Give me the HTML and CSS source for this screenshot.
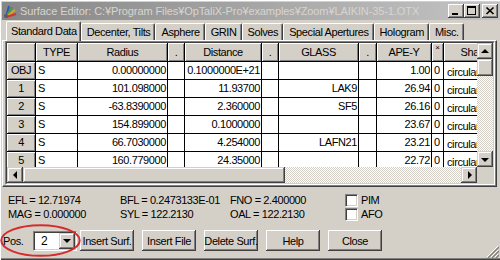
FILE: index.html
```html
<!DOCTYPE html>
<html lang="en">
	<head>
		<meta charset="UTF-8" />
		<meta name="viewport" content="width=device-width, initial-scale=1.0" />
		<title>Surface Editor</title>
		<link rel="stylesheet" href="styles.css">
	</head>
	<body>
		<div class="window">
			<div class="titlebar">
				<svg class="appicon" viewBox="0 0 16 16" width="16" height="16">
					<path d="M3 14 L6 3" stroke="#2f57b8" stroke-width="2" fill="none" />
					<path d="M3 14 L9 4" stroke="#3b9a52" stroke-width="2" fill="none" />
					<path d="M3 14 L12 7" stroke="#d8a424" stroke-width="2" fill="none" />
					<path d="M3 14 L13 11" stroke="#c8382c" stroke-width="2" fill="none" />
					<circle cx="3" cy="13" r="2" fill="#5a5a6a" />
				</svg>
				<span class="title">Surface Editor: C:¥Program Files¥OpTaliX-Pro¥examples¥Zoom¥LAIKIN-35-1.OTX</span>
				<div class="caption-btns">
					<span class="cbtn">
						<svg width="16" height="14"><rect x="4" y="9" width="6" height="2" /></svg>
					</span>
					<span class="cbtn">
						<svg width="16" height="14"><path d="M3 2h9v9H3z M4 4v6h7V4z" fill-rule="evenodd" /></svg>
					</span>
					<span class="cbtn close">
						<svg width="16" height="14"><path d="M4.5 3.5l7 6.5M11.5 3.5l-7 6.5" stroke="#000" stroke-width="1.7" /></svg>
					</span>
				</div>
			</div>

			<div class="tabs">
				<span class="tab active">Standard Data</span>
				<span class="tab">Decenter, Tilts</span>
				<span class="tab">Asphere</span>
				<span class="tab">GRIN</span>
				<span class="tab">Solves</span>
				<span class="tab">Special Apertures</span>
				<span class="tab">Hologram</span>
				<span class="tab">Misc.</span>
			</div>

			<div class="panel">
				<div class="frame">
					<div class="frame-in">
						<div class="view">
							<div class="sheet">
								<div class="c h"></div>
								<div class="c h">TYPE</div>
								<div class="c h">Radius</div>
								<div class="c h">.</div>
								<div class="c h">Distance</div>
								<div class="c h">.</div>
								<div class="c h">GLASS</div>
								<div class="c h">.</div>
								<div class="c h">APE-Y</div>
								<div class="c h small">×</div>
								<div class="c h">Shape</div>

								<div class="c h">OBJ</div>
								<div class="c">S</div>
								<div class="c r">0.00000000</div>
								<div class="c"></div>
								<div class="c r">0.1000000E+21</div>
								<div class="c"></div>
								<div class="c r"></div>
								<div class="c"></div>
								<div class="c r">1.00</div>
								<div class="c">0</div>
								<div class="c sh">circular</div>

								<div class="c h">1</div>
								<div class="c">S</div>
								<div class="c r">101.098000</div>
								<div class="c"></div>
								<div class="c r">11.93700</div>
								<div class="c"></div>
								<div class="c r">LAK9</div>
								<div class="c"></div>
								<div class="c r">26.94</div>
								<div class="c">0</div>
								<div class="c sh">circular</div>

								<div class="c h">2</div>
								<div class="c">S</div>
								<div class="c r">-63.8390000</div>
								<div class="c"></div>
								<div class="c r">2.360000</div>
								<div class="c"></div>
								<div class="c r">SF5</div>
								<div class="c"></div>
								<div class="c r">26.16</div>
								<div class="c">0</div>
								<div class="c sh">circular</div>

								<div class="c h">3</div>
								<div class="c">S</div>
								<div class="c r">154.899000</div>
								<div class="c"></div>
								<div class="c r">0.1000000</div>
								<div class="c"></div>
								<div class="c r"></div>
								<div class="c"></div>
								<div class="c r">23.67</div>
								<div class="c">0</div>
								<div class="c sh">circular</div>

								<div class="c h">4</div>
								<div class="c">S</div>
								<div class="c r">66.7030000</div>
								<div class="c"></div>
								<div class="c r">4.254000</div>
								<div class="c"></div>
								<div class="c r">LAFN21</div>
								<div class="c"></div>
								<div class="c r">23.21</div>
								<div class="c">0</div>
								<div class="c sh">circular</div>

								<div class="c h">5</div>
								<div class="c">S</div>
								<div class="c r">160.779000</div>
								<div class="c"></div>
								<div class="c r">24.35000</div>
								<div class="c"></div>
								<div class="c r"></div>
								<div class="c"></div>
								<div class="c r">22.72</div>
								<div class="c">0</div>
								<div class="c sh">circular</div>
							</div>
						</div>
						<div class="vscroll">
							<span class="sbtn"><i class="arr up"></i></span>
							<span class="thumb thumb-v"></span>
							<span class="track"></span>
							<span class="sbtn"><i class="arr down"></i></span>
						</div>
						<div class="hscroll">
							<span class="sbtn"><i class="arr left"></i></span>
							<span class="thumb thumb-h"></span>
							<span class="track"></span>
							<span class="sbtn"><i class="arr right"></i></span>
						</div>
						<div class="corner"></div>
					</div>
				</div>
			</div>

			<div class="info">
				<span>EFL = 12.71974</span>
				<span>BFL = 0.2473133E-01</span>
				<span>FNO = 2.400000</span>
				<label class="check"><span class="chk"></span>PIM</label>
				<span>MAG = 0.000000</span>
				<span>SYL = 122.2130</span>
				<span>OAL = 122.2130</span>
				<label class="check"><span class="chk"></span>AFO</label>
			</div>

			<div class="actions">
				<span class="pos-label">Pos.</span>
				<div class="combo">
					<span class="combo-val">2</span>
					<span class="sbtn"><i class="arr down"></i></span>
				</div>
				<button class="btn">Insert Surf.</button>
				<button class="btn">Insert File</button>
				<button class="btn">Delete Surf.</button>
				<button class="btn">Help</button>
				<button class="btn">Close</button>
			</div>

			<!-- annotation drawn over the Pos. combo -->
			<svg class="mark" width="82" height="35" viewBox="0 0 82 35">
				<ellipse cx="40.5" cy="16.5" rx="39.2" ry="15.3" fill="none" stroke="#d82a2a" stroke-width="2" />
			</svg>
			<svg class="grip" width="12" height="12" viewBox="0 0 12 12">
				<path d="M11 0L0 11M11 4L4 11M11 8L8 11" stroke="#fff" stroke-width="1" />
				<path d="M12 1L1 12M12 5L5 12M12 9L9 12" stroke="#808080" stroke-width="1.4" />
			</svg>
		</div>
	</body>
</html>
```

FILE: styles.css
```css
html,
body {
	margin: 0;
	padding: 0;
}
body {
	width: 500px;
	height: 260px;
	overflow: hidden;
	background: #d4d0c8;
	font-family: 'Liberation Sans', Arial, sans-serif;
	font-size: 11px;
	letter-spacing: -0.4px;
	color: #000;
}

.window {
	position: relative;
	box-sizing: border-box;
	width: 500px;
	height: 260px;
	padding: 2px 0 2px 2px;
	display: flex;
	flex-direction: column;
	background: #d4d0c8;
	box-shadow: inset 1px 1px #fff, inset 0 -1px #404040, inset 0 -2px #808080;
}

/* title bar (inactive) */
.titlebar {
	flex: none;
	height: 18px;
	display: flex;
	align-items: center;
	padding-left: 1px;
	background: linear-gradient(90deg, #868686, #c4c4c4);
	color: #d8d5ce;
}
.appicon {
	flex: none;
	margin-right: 1px;
}
.title {
	flex: 1;
	white-space: nowrap;
	overflow: hidden;
	letter-spacing: -0.1px;
}
.caption-btns {
	display: flex;
	margin-right: 2px;
}
.cbtn {
	width: 16px;
	height: 14px;
	background: #d4d0c8;
	box-shadow: inset -1px -1px #404040, inset 1px 1px #fff, inset -2px -2px #808080;
}
.cbtn svg {
	display: block;
}
.cbtn.close {
	margin-left: 2px;
}

/* tabs */
.tabs {
	flex: none;
	height: 20px;
	display: flex;
	align-items: flex-end;
	padding-left: 4px;
}
.tab {
	box-sizing: border-box;
	height: 17px;
	padding: 2px 4px 0 5px;
	line-height: 13px;
	white-space: nowrap;
	border-top: 1px solid #fff;
	border-left: 1px solid #fff;
	border-right: 1px solid #404040;
	border-radius: 2px 2px 0 0;
	box-shadow: inset -1px 0 #808080;
}
.tab.active {
	position: relative;
	z-index: 1;
	height: 20px;
	margin-bottom: -1px;
	padding: 3px 3px 0 4px;
	background: #d4d0c8;
}

/* tab page */
.panel {
	flex: none;
	margin-right: 3px;
	padding: 0 1px 1px 2px;
	border-top: 1px solid #fff;
	border-left: 1px solid #fff;
	border-right: 1px solid #404040;
	border-bottom: 1px solid #404040;
	box-shadow: inset -1px -1px #808080;
}
.frame {
	border: 1px solid;
	border-color: #808080 #fff #fff #808080;
}
.frame-in {
	display: grid;
	grid-template-columns: 470px 16px;
	grid-template-rows: 124px 16px;
	border: 1px solid;
	border-color: #404040 #d4d0c8 #d4d0c8 #404040;
}
.view {
	overflow: hidden;
	background: #fff;
}

.sheet {
	display: grid;
	grid-template-columns: 29px 42px 90px 17px 77px 17px 80px 18px 55px 12px 64px;
	grid-template-rows: 19px repeat(6, 18px);
}
.c {
	box-sizing: border-box;
	border-right: 1px solid #000;
	border-bottom: 1px solid #000;
	padding: 0 2px;
	line-height: 17px;
	white-space: nowrap;
	overflow: hidden;
	background: #fff;
}
.c.h {
	background: #d4d0c8;
	text-align: center;
	box-shadow: inset 1px 1px #fff, inset -1px -1px #808080;
}
.sheet > .c.h:nth-child(-n + 11) {
	line-height: 18px;
}
.c.r {
	text-align: right;
	padding-right: 1px;
}
.c.small {
	font-size: 8px;
	line-height: 10px !important;
}
.c.sh {
	padding: 2px 0 0 3px;
	line-height: 16px;
}

/* scroll bars */
.vscroll,
.hscroll {
	display: flex;
	background: repeating-conic-gradient(#fff 0 25%, #d4d0c8 0 50%) 0 0 / 2px 2px;
}
.vscroll {
	flex-direction: column;
}
.sbtn,
.thumb {
	box-sizing: border-box;
	flex: none;
	background: #d4d0c8;
	box-shadow: inset -1px -1px #404040, inset 1px 1px #d4d0c8, inset -2px -2px #808080,
		inset 2px 2px #fff;
}
.sbtn {
	width: 16px;
	height: 16px;
	display: flex;
	align-items: center;
	justify-content: center;
}
.thumb-v {
	height: 17px;
}
.thumb-h {
	width: 262px;
}
.track {
	flex: 1;
}
.corner {
	background: #d4d0c8;
}

.arr {
	width: 0;
	height: 0;
	border: 4px solid transparent;
}
.arr.up {
	border-bottom-color: #000;
	border-top-width: 0;
	margin-top: -1px;
}
.arr.down {
	border-top-color: #000;
	border-bottom-width: 0;
	margin-top: 1px;
}
.arr.left {
	border-right-color: #000;
	border-left-width: 0;
	margin-left: -1px;
}
.arr.right {
	border-left-color: #000;
	border-right-width: 0;
	margin-left: 1px;
}

/* results */
.info {
	flex: none;
	display: grid;
	grid-template-columns: 112px 110px 115px auto;
	grid-auto-rows: 14px;
	padding: 6px 0 0 6px;
	line-height: 14px;
	white-space: nowrap;
}
.check {
	display: flex;
	align-items: center;
	gap: 3px;
}
.chk {
	box-sizing: border-box;
	width: 13px;
	height: 13px;
	background: #fff;
	border: 1px solid;
	border-color: #808080 #fff #fff #808080;
	box-shadow: inset 1px 1px #404040, inset -1px -1px #d4d0c8;
}

/* buttons */
.actions {
	flex: none;
	display: flex;
	align-items: center;
	gap: 8px;
	height: 21px;
	margin-top: 9px;
	padding-left: 1px;
}
.pos-label {
	width: 22px;
}
.combo {
	box-sizing: border-box;
	display: flex;
	width: 44px;
	height: 20px;
	margin-right: -5px;
	padding: 1px;
	background: #fff;
	border: 1px solid;
	border-color: #808080 #fff #fff #808080;
	box-shadow: inset 1px 1px #404040, inset -1px -1px #d4d0c8;
}
.combo-val {
	flex: 1;
	padding-left: 6px;
	line-height: 16px;
	font-size: 12px;
}
.btn {
	box-sizing: border-box;
	width: 54px;
	height: 21px;
	padding: 0;
	border: none;
	background: #d4d0c8;
	font: inherit;
	letter-spacing: -0.4px;
	white-space: nowrap;
	color: #000;
	box-shadow: inset -1px -1px #404040, inset 1px 1px #fff, inset -2px -2px #808080;
}

.mark {
	position: absolute;
	left: 0;
	top: 224px;
}
.grip {
	position: absolute;
	right: 1px;
	bottom: 2px;
}
```
